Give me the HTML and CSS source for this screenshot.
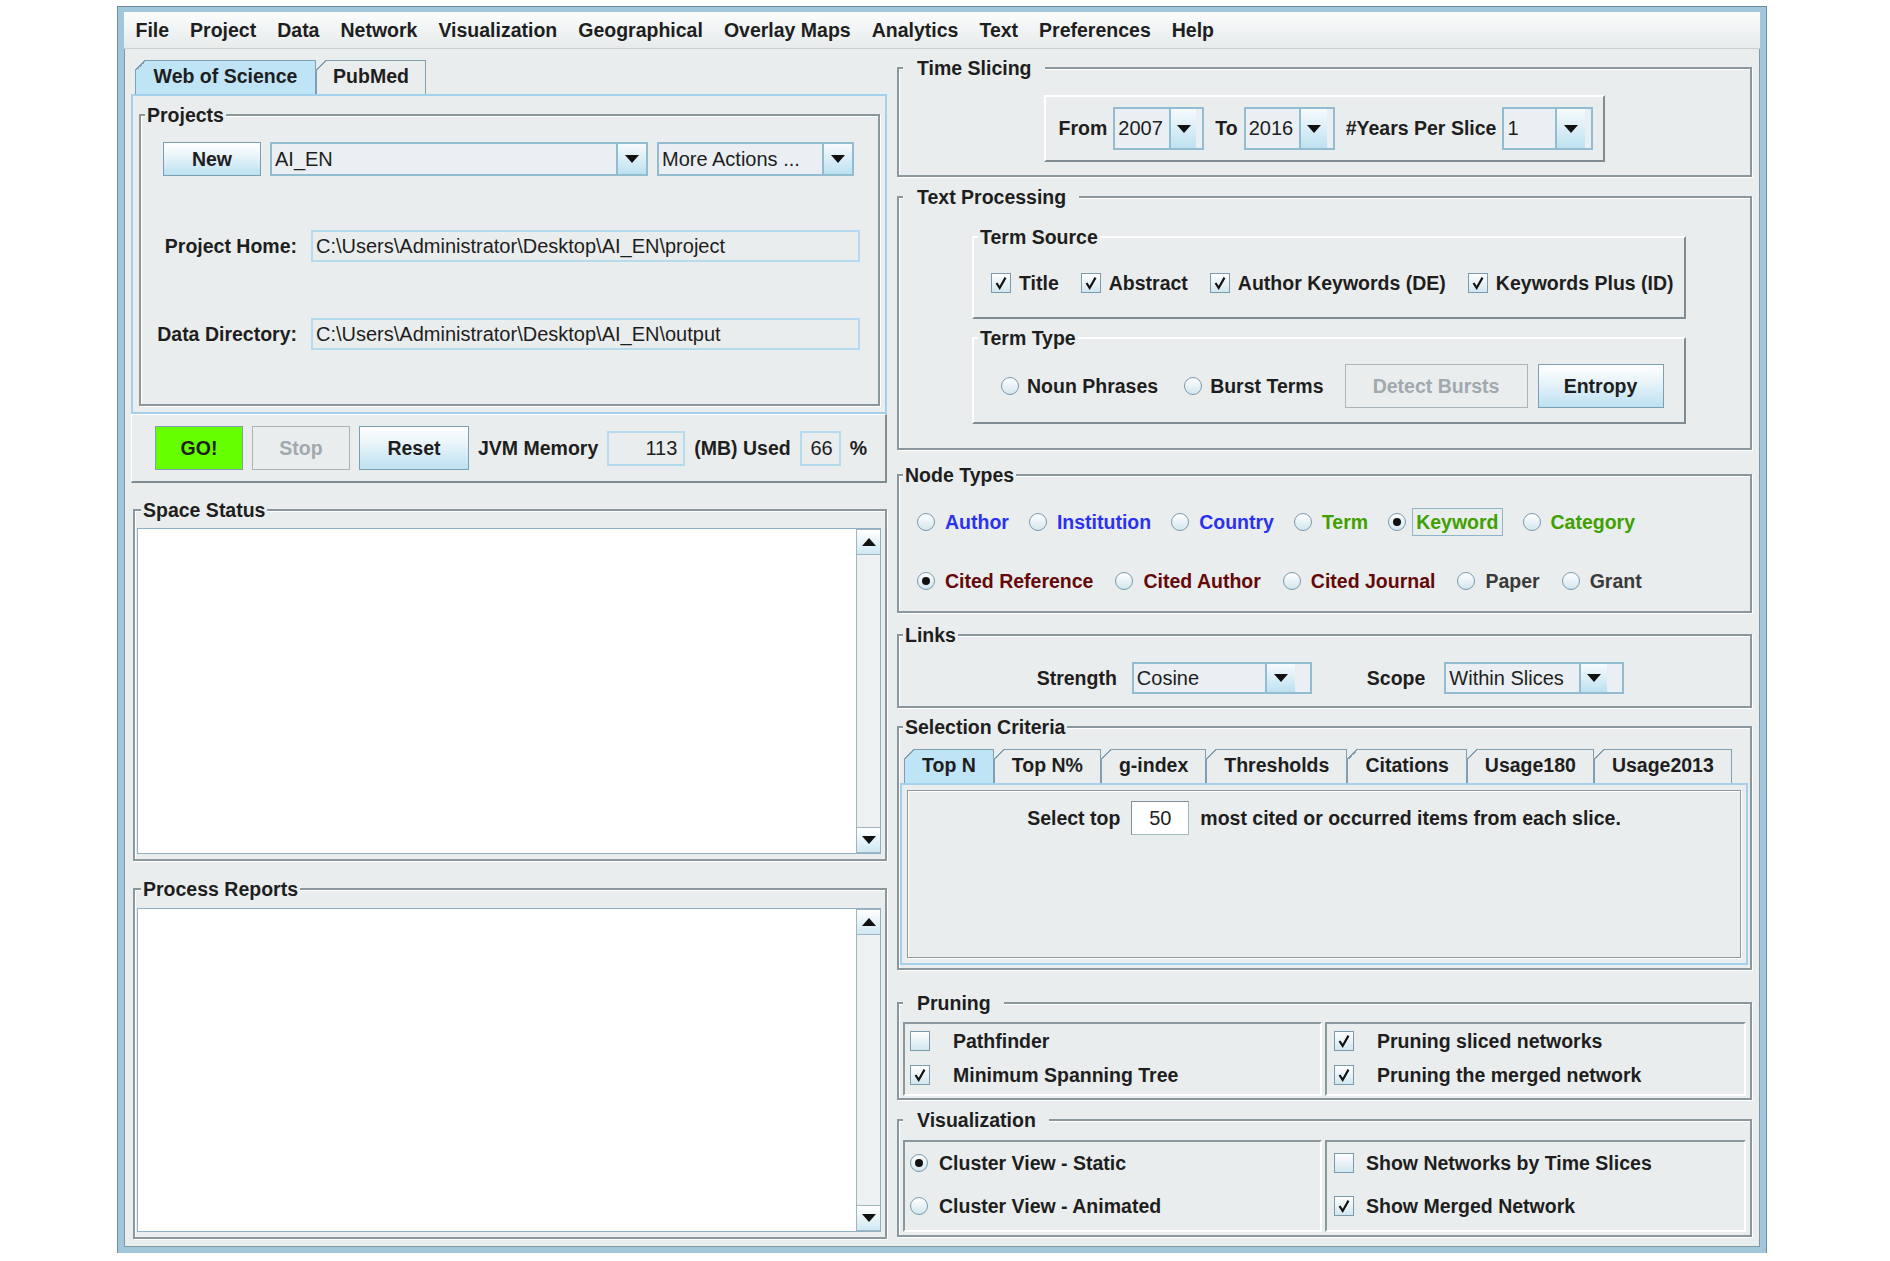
FILE: index.html
```html
<!DOCTYPE html>
<html lang="en">

<head>
    <meta charset="UTF-8">
    <meta name="viewport" content="width=device-width, initial-scale=1.0">
    <title>CiteSpace</title>
    <link rel="stylesheet" href="styles.css">
</head>

<body>
    <div class="window">
        <div class="menubar">
            <span>File</span><span>Project</span><span>Data</span><span>Network</span><span>Visualization</span><span>Geographical</span><span>Overlay Maps</span><span>Analytics</span><span>Text</span><span>Preferences</span><span>Help</span>
        </div>

        <div class="main">
            <!-- left column -->
            <div class="left">
                <div class="tabs source-tabs">
                    <div class="tab selected wos">Web of Science</div>
                    <div class="tab pubmed">PubMed</div>
                </div>
                <div class="tab-panel source-panel">
                    <fieldset class="group projects">
                        <legend>Projects</legend>
                        <div class="project-row">
                            <div class="btn new">New</div>
                            <div class="combo project-combo"><span class="value">AI_EN</span><span class="arrow"><i></i></span></div>
                            <div class="combo more-combo"><span class="value">More Actions ...</span><span class="arrow"><i></i></span></div>
                        </div>
                        <div class="paths">
                            <span class="path-label">Project Home:</span>
                            <div class="field path">C:\Users\Administrator\Desktop\AI_EN\project</div>
                            <span class="path-label data-label">Data Directory:</span>
                            <div class="field path">C:\Users\Administrator\Desktop\AI_EN\output</div>
                        </div>
                    </fieldset>
                </div>

                <div class="run-bar">
                    <div class="btn go">GO!</div>
                    <div class="btn disabled stop">Stop</div>
                    <div class="btn reset">Reset</div>
                    <span class="mem-label">JVM Memory</span>
                    <div class="field num mem">113</div>
                    <span>(MB) Used</span>
                    <div class="field num used">66</div>
                    <span>%</span>
                </div>

                <fieldset class="group log space-status">
                    <legend>Space Status</legend>
                    <div class="textarea">
                        <div class="area"></div>
                        <div class="vscroll">
                            <div class="sbtn"><i class="up"></i></div>
                            <div class="track"></div>
                            <div class="sbtn"><i class="down"></i></div>
                        </div>
                    </div>
                </fieldset>

                <fieldset class="group log reports">
                    <legend>Process Reports</legend>
                    <div class="textarea">
                        <div class="area"></div>
                        <div class="vscroll">
                            <div class="sbtn"><i class="up"></i></div>
                            <div class="track"></div>
                            <div class="sbtn"><i class="down"></i></div>
                        </div>
                    </div>
                </fieldset>
            </div>

            <!-- right column -->
            <div class="right">
                <fieldset class="group spaced time-slicing">
                    <legend>Time Slicing</legend>
                    <div class="slice-box">
                        <span>From</span>
                        <div class="combo year"><span class="value">2007</span><span class="arrow"><i></i></span></div>
                        <span>To</span>
                        <div class="combo year"><span class="value">2016</span><span class="arrow"><i></i></span></div>
                        <span>#Years Per Slice</span>
                        <div class="combo year"><span class="value">1</span><span class="arrow"><i></i></span></div>
                    </div>
                </fieldset>

                <fieldset class="group spaced text-processing">
                    <legend>Text Processing</legend>
                    <fieldset class="raised term-source">
                        <legend>Term Source</legend>
                        <div class="option-row source-row">
                            <label class="opt"><span class="cb on"><svg viewBox="0 0 20 20"><path d="M5 10 L8.5 15.5 L15 4"/></svg></span>Title</label>
                            <label class="opt"><span class="cb on"><svg viewBox="0 0 20 20"><path d="M5 10 L8.5 15.5 L15 4"/></svg></span>Abstract</label>
                            <label class="opt"><span class="cb on"><svg viewBox="0 0 20 20"><path d="M5 10 L8.5 15.5 L15 4"/></svg></span>Author Keywords (DE)</label>
                            <label class="opt"><span class="cb on"><svg viewBox="0 0 20 20"><path d="M5 10 L8.5 15.5 L15 4"/></svg></span>Keywords Plus (ID)</label>
                        </div>
                    </fieldset>
                    <fieldset class="raised term-type">
                        <legend>Term Type</legend>
                        <div class="option-row type-row">
                            <label class="opt"><span class="radio"></span>Noun Phrases</label>
                            <label class="opt"><span class="radio"></span>Burst Terms</label>
                            <div class="btn disabled detect">Detect Bursts</div>
                            <div class="btn entropy">Entropy</div>
                        </div>
                    </fieldset>
                </fieldset>

                <fieldset class="group node-types">
                    <legend>Node Types</legend>
                    <div class="node-row">
                        <label class="opt blue"><span class="radio"></span>Author</label>
                        <label class="opt blue"><span class="radio"></span>Institution</label>
                        <label class="opt blue"><span class="radio"></span>Country</label>
                        <label class="opt green"><span class="radio"></span>Term</label>
                        <label class="opt green"><span class="radio on"></span><span class="focus">Keyword</span></label>
                        <label class="opt green"><span class="radio"></span>Category</label>
                    </div>
                    <div class="node-row second">
                        <label class="opt red"><span class="radio on"></span>Cited Reference</label>
                        <label class="opt red"><span class="radio"></span>Cited Author</label>
                        <label class="opt red"><span class="radio"></span>Cited Journal</label>
                        <label class="opt gray"><span class="radio"></span>Paper</label>
                        <label class="opt gray"><span class="radio"></span>Grant</label>
                    </div>
                </fieldset>

                <fieldset class="group links">
                    <legend>Links</legend>
                    <div class="links-row">
                        <span>Strength</span>
                        <div class="combo link-combo"><span class="value">Cosine</span><span class="arrow"><i></i></span></div>
                        <span class="scope">Scope</span>
                        <div class="combo link-combo"><span class="value">Within Slices</span><span class="arrow"><i></i></span></div>
                    </div>
                </fieldset>

                <fieldset class="group criteria">
                    <legend>Selection Criteria</legend>
                    <div class="tabs criteria-tabs">
                        <div class="tab selected">Top N</div>
                        <div class="tab">Top N%</div>
                        <div class="tab">g-index</div>
                        <div class="tab">Thresholds</div>
                        <div class="tab">Citations</div>
                        <div class="tab">Usage180</div>
                        <div class="tab">Usage2013</div>
                    </div>
                    <div class="tab-panel criteria-panel">
                        <div class="inset-panel">
                            <div class="top-row">
                                <span>Select top</span>
                                <div class="field top-field">50</div>
                                <span>most cited or occurred items from each slice.</span>
                            </div>
                        </div>
                    </div>
                </fieldset>

                <fieldset class="group spaced pruning">
                    <legend>Pruning</legend>
                    <div class="split">
                        <div class="sub">
                            <label class="opt wide-gap"><span class="cb"></span>Pathfinder</label>
                            <label class="opt wide-gap"><span class="cb on"><svg viewBox="0 0 20 20"><path d="M5 10 L8.5 15.5 L15 4"/></svg></span>Minimum Spanning Tree</label>
                        </div>
                        <div class="sub">
                            <label class="opt wide-gap"><span class="cb on"><svg viewBox="0 0 20 20"><path d="M5 10 L8.5 15.5 L15 4"/></svg></span>Pruning sliced networks</label>
                            <label class="opt wide-gap"><span class="cb on"><svg viewBox="0 0 20 20"><path d="M5 10 L8.5 15.5 L15 4"/></svg></span>Pruning the merged network</label>
                        </div>
                    </div>
                </fieldset>

                <fieldset class="group spaced visualization">
                    <legend>Visualization</legend>
                    <div class="split">
                        <div class="sub">
                            <label class="opt"><span class="radio on"></span>Cluster View - Static</label>
                            <label class="opt"><span class="radio"></span>Cluster View - Animated</label>
                        </div>
                        <div class="sub">
                            <label class="opt"><span class="cb"></span>Show Networks by Time Slices</label>
                            <label class="opt"><span class="cb on"><svg viewBox="0 0 20 20"><path d="M5 10 L8.5 15.5 L15 4"/></svg></span>Show Merged Network</label>
                        </div>
                    </div>
                </fieldset>
            </div>
        </div>
    </div>
</body>

</html>
```

FILE: styles.css
```css
* {
    box-sizing: border-box;
}

body {
    margin: 0;
    background-color: #fff;
    font-family: "Liberation Sans", Arial, sans-serif;
    font-size: 19.5px;
    font-weight: bold;
    color: #1e1e1e;
    overflow: hidden;
}

/* window frame */
.window {
    width: 1648px;
    height: 1246px;
    margin: 7px 0 0 118px;
    border: 6px solid #a2c6da;
    border-top-width: 5px;
    box-shadow: 0 0 0 1px #6f8b9b, inset 0 0 0 1px #7e98a6;
    background-color: #eaeded;
    display: flex;
    flex-direction: column;
}

.menubar {
    height: 37px;
    flex-shrink: 0;
    display: flex;
    align-items: center;
    padding-left: 1px;
    background: linear-gradient(#fbfcfc, #e7ebec);
    border-bottom: 1px solid #c9d1d4;
}

.menubar span {
    padding: 0 10.5px;
}

.main {
    flex: 1;
    display: flex;
}

.left {
    width: 756px;
    margin-left: 7px;
    padding-top: 11px;
    display: flex;
    flex-direction: column;
}

.right {
    width: 867px;
    margin-left: 4px;
    display: flex;
    flex-direction: column;
}

/* titled borders */
.group {
    margin: 0;
    padding: 0;
    min-width: 0;
    border: 2px solid #8a979c;
    box-shadow: inset 1px 1px 0 #fff, 1px 1px 0 #fff;
}

.group > legend {
    margin-left: 4px;
    padding: 0 2px;
    line-height: 22px;
    background-color: #eaeded;
}

.group.spaced > legend {
    padding: 0 13px 0 14px;
}

.raised {
    margin: 0 0 0 73px;
    padding: 0;
    min-width: 0;
    width: 714px;
    border: 2px solid;
    border-color: #fff #7f8d93 #7f8d93 #fff;
}

.raised > legend {
    margin-left: 4px;
    padding: 0 2px;
    line-height: 22px;
}

/* tabs */
.tabs {
    display: flex;
    height: 34px;
    flex-shrink: 0;
}

.tab {
    position: relative;
    display: flex;
    align-items: center;
    justify-content: center;
    border: 1px solid #819fb1;
    border-bottom: none;
    background-color: #eaeded;
    padding: 0 17px 2px;
}

.tab::before {
    content: "";
    position: absolute;
    left: -1px;
    top: -1px;
    width: 10px;
    height: 10px;
    background: linear-gradient(135deg, #eaeded 0 48%, #819fb1 48% 60%, transparent 60%);
}

.tab.selected {
    background-color: #bfe4f6;
}

.source-tabs {
    padding-left: 4px;
}

.tab.wos {
    width: 181px;
}

.tab.pubmed {
    width: 110px;
}

.tab-panel {
    border: 2px solid #a3d0ea;
}

.source-panel {
    height: 320px;
    display: flex;
    flex-direction: column;
}

.projects {
    flex: 1;
    margin: 8px 5px 6px 6px;
}

.project-row {
    display: flex;
    gap: 9px;
    margin: 16px 0 0 22px;
    height: 34px;
}

/* buttons */
.btn {
    display: flex;
    align-items: center;
    justify-content: center;
    border: 1px solid #7d9fb3;
    background: linear-gradient(#ffffff, #e8f4fa 40%, #bde1f1);
}

.btn.disabled {
    background: #eaeded;
    border-color: #a9b5ba;
    color: #a0a9ad;
}

.btn.new {
    width: 98px;
}

.btn.go {
    width: 88px;
    background: #66ff00;
}

.btn.stop {
    width: 98px;
}

.btn.reset {
    width: 110px;
}

.btn.detect {
    width: 183px;
    height: 44px;
    margin-left: 21px;
}

.btn.entropy {
    width: 126px;
    height: 44px;
    margin-left: 10px;
}

/* combo boxes */
.combo {
    display: flex;
    border: 2px solid #94bcd1;
    background-color: #e9eff2;
}

.combo .value {
    flex: 1;
    display: flex;
    align-items: center;
    padding-left: 3px;
    font-weight: normal;
    font-size: 20px;
    white-space: nowrap;
}

.combo .arrow {
    width: 30px;
    border-left: 2px solid #94bcd1;
    background: linear-gradient(#f7fbfd, #bde1f1);
    display: flex;
    align-items: center;
    justify-content: center;
}

.combo .arrow i {
    border-left: 7px solid transparent;
    border-right: 7px solid transparent;
    border-top: 8px solid #111;
}

.project-combo {
    width: 378px;
}

.more-combo {
    width: 197px;
}

.year {
    width: 91px;
    height: 43px;
}

.link-combo {
    width: 180px;
    height: 32px;
}

/* text fields */
.field {
    display: flex;
    align-items: center;
    border: 2px solid #b6dbee;
    font-weight: normal;
    font-size: 20px;
    padding-left: 3px;
    white-space: nowrap;
}

.field.num {
    justify-content: flex-end;
    padding-right: 6px;
    height: 35px;
}

.mem {
    width: 78px;
}

.used {
    width: 41px;
}

.paths {
    display: grid;
    grid-template-columns: 156px 549px;
    column-gap: 14px;
    row-gap: 56px;
    align-items: center;
    margin-top: 54px;
}

.path-label {
    justify-self: end;
}

.path {
    height: 32px;
}

/* run bar */
.run-bar {
    height: 69px;
    flex-shrink: 0;
    display: flex;
    align-items: center;
    gap: 9px;
    padding-left: 23px;
    border: 1px solid #fff;
    border-right: 2px solid #7f8d93;
    border-bottom: 2px solid #7f8d93;
}

.run-bar .btn {
    height: 44px;
}

/* log areas */
.log {
    margin-left: 2px;
    padding: 7px 4px 5px 2px;
}

.space-status {
    margin-top: 16px;
}

.reports {
    margin-top: 17px;
    padding-top: 8px;
}

.textarea {
    display: flex;
    background-color: #fff;
    border: 1px solid #8fb1c3;
}

.space-status .textarea {
    height: 326px;
}

.reports .textarea {
    height: 324px;
}

.area {
    flex: 1;
}

.vscroll {
    width: 24px;
    display: flex;
    flex-direction: column;
    border-left: 1px solid #9fb6c2;
    background-color: #eef1f2;
}

.sbtn {
    height: 26px;
    display: flex;
    align-items: center;
    justify-content: center;
    background: linear-gradient(#ffffff, #cfe8f3);
    border-top: 1px solid #9fb6c2;
    border-bottom: 1px solid #9fb6c2;
}

.track {
    flex: 1;
}

.sbtn .up {
    border-left: 7px solid transparent;
    border-right: 7px solid transparent;
    border-bottom: 8px solid #111;
}

.sbtn .down {
    border-left: 7px solid transparent;
    border-right: 7px solid transparent;
    border-top: 8px solid #111;
}

/* right side groups */
.right > .group {
    margin-left: 6px;
    margin-right: 6px;
}

.time-slicing {
    margin-top: 8px;
    padding-bottom: 13px;
}

.slice-box {
    display: flex;
    align-items: center;
    width: max-content;
    margin: 16px auto 0;
    padding: 10px 10px 10px 13px;
    border: 2px solid;
    border-color: #fff #7f8d93 #7f8d93 #fff;
}

.slice-box span {
    margin-right: 6px;
}

.slice-box .combo {
    margin-right: 11px;
}

.slice-box .combo:last-child {
    margin-right: 0;
}

.text-processing {
    margin-top: 9px;
    padding-bottom: 24px;
}

.term-source {
    margin-top: 18px;
    padding: 24px 0 23px;
}

.term-type {
    margin-top: 8px;
    padding: 15px 0 14px;
}

/* options */
.option-row {
    display: flex;
    align-items: center;
}

.source-row {
    gap: 22px;
    height: 22px;
    margin-left: 17px;
}

.type-row {
    height: 44px;
    margin-left: 27px;
}

.type-row .opt {
    margin-right: 26px;
}

.type-row .opt + .opt {
    margin-right: 0;
}

.opt {
    display: flex;
    align-items: center;
    gap: 8px;
    height: 22px;
    white-space: nowrap;
}

.cb {
    width: 20px;
    height: 20px;
    border: 1px solid #7b9aab;
    background: linear-gradient(#ffffff, #d2e6ef);
    display: flex;
    align-items: center;
    justify-content: center;
}

.cb svg {
    width: 18px;
    height: 18px;
}

.cb svg path {
    fill: none;
    stroke: #111;
    stroke-width: 2.4;
}

.radio {
    width: 18px;
    height: 18px;
    border-radius: 50%;
    border: 1px solid #7b9aab;
    background: linear-gradient(#ffffff, #d2e6ef);
    display: flex;
    align-items: center;
    justify-content: center;
}

.radio.on::after {
    content: "";
    width: 8px;
    height: 8px;
    border-radius: 50%;
    background-color: #111;
}

.node-types {
    margin-top: 14px;
    padding: 25px 0 19px;
}

.node-row {
    display: flex;
    gap: 20px;
    margin-left: 18px;
}

.node-row.second {
    margin-top: 37px;
    gap: 22px;
}

.node-row .opt {
    gap: 10px;
}

.blue {
    color: #2a32f0;
}

.green {
    color: #3fa000;
}

.red {
    color: #650808;
}

.gray {
    color: #3a3a3a;
}

.focus {
    border: 1px solid #8fb5c8;
    padding: 0 3px;
    margin-left: -4px;
    line-height: 26px;
}

.links {
    margin-top: 11px;
    padding: 16px 0 12px;
}

.links-row {
    display: flex;
    align-items: center;
    justify-content: center;
    padding-left: 12px;
}

.links-row span {
    margin-right: 15px;
}

.links-row .scope {
    margin-left: 55px;
    margin-right: 19px;
}

.criteria {
    margin-top: 8px;
    padding: 11px 0 3px;
}

.criteria-tabs {
    padding-left: 5px;
}

.criteria-panel {
    height: 182px;
    margin: 0 2px 0 1px;
    padding: 5px;
}

.inset-panel {
    height: 100%;
    border: 1px solid #8d9aa0;
    box-shadow: inset 1px 1px 0 #fff, 1px 1px 0 #fff;
    padding-top: 10px;
}

.top-row {
    display: flex;
    align-items: center;
    justify-content: center;
    gap: 11px;
}

.top-field {
    width: 58px;
    height: 34px;
    justify-content: center;
    background-color: #fff;
    border: 1px solid #a5bac4;
    border-top-color: #7f8f96;
    border-left-color: #7f8f96;
    padding: 0;
}

.pruning {
    margin-top: 22px;
    padding: 8px 0 2px;
}

.visualization {
    margin-top: 9px;
    padding: 9px 0 3px;
}

.split {
    display: flex;
    gap: 3px;
    margin: 0 4px;
}

.sub {
    flex: 1;
    border: 2px solid;
    border-color: #8a979c #fff #fff #8a979c;
    display: flex;
    flex-direction: column;
}

.pruning .sub {
    height: 74px;
    padding: 6px 0 0 5px;
    gap: 12px;
}

.pruning .sub + .sub {
    padding-left: 7px;
}

.opt.wide-gap {
    gap: 23px;
}

.visualization .sub {
    height: 92px;
    padding: 10px 0 0 5px;
    gap: 21px;
}

.visualization .sub .opt {
    gap: 11px;
}

.visualization .sub + .sub {
    padding-left: 7px;
}

.visualization .sub + .sub .opt {
    gap: 12px;
}
```
